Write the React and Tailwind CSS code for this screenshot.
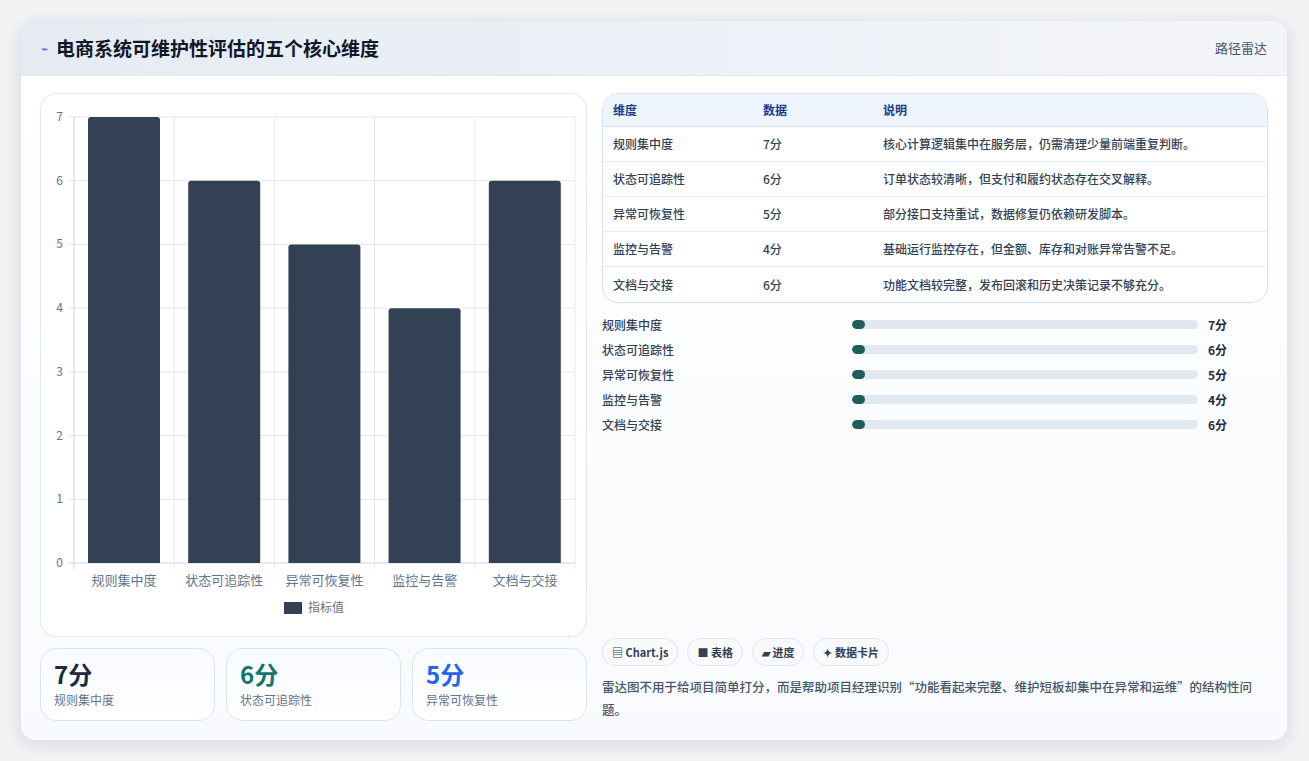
const rows = [
  { name: '规则集中度', v: 7, note: '核心计算逻辑集中在服务层，仍需清理少量前端重复判断。' },
  { name: '状态可追踪性', v: 6, note: '订单状态较清晰，但支付和履约状态存在交叉解释。' },
  { name: '异常可恢复性', v: 5, note: '部分接口支持重试，数据修复仍依赖研发脚本。' },
  { name: '监控与告警', v: 4, note: '基础运行监控存在，但金额、库存和对账异常告警不足。' },
  { name: '文档与交接', v: 6, note: '功能文档较完整，发布回滚和历史决策记录不够充分。' },
];

const font = { fontFamily: '"Noto Sans CJK SC", "Noto Sans", sans-serif' };

function Chart() {
  // plot area in svg coords: x 33..534, y 23..469
  const x0 = 33, w = 501, y0 = 23, h = 446;
  const step = w / 5;
  const unit = h / 7;
  return (
    <svg width="546" height="543" viewBox="0 0 546 543" className="block">
      {[0, 1, 2, 3, 4, 5, 6, 7].map((t) => (
        <g key={t}>
          <line x1={x0 - 6} x2={x0 + w} y1={y0 + h - t * unit} y2={y0 + h - t * unit} stroke={t === 0 ? '#cbd5e1' : '#e5e7eb'} />
          <text x={22} y={y0 + h - t * unit + 4} textAnchor="end" fontSize="12" fill="#64748b" style={font}>{t}</text>
        </g>
      ))}
      {[0, 1, 2, 3, 4, 5].map((i) => (
        <line key={i} x1={x0 + i * step} x2={x0 + i * step} y1={y0} y2={y0 + h + 6} stroke={i === 0 ? '#cbd5e1' : '#e5e7eb'} />
      ))}
      {rows.map((r, i) => {
        const bx = x0 + i * step + 14;
        const bh = r.v * unit;
        return (
          <g key={r.name}>
            <path d={`M${bx} ${y0 + h} V${y0 + h - bh + 3} Q${bx} ${y0 + h - bh} ${bx + 3} ${y0 + h - bh} H${bx + 69} Q${bx + 72} ${y0 + h - bh} ${bx + 72} ${y0 + h - bh + 3} V${y0 + h}Z`} fill="#334155" />
            <text x={x0 + i * step + step / 2} y={y0 + h + 22} textAnchor="middle" fontSize="13" fill="#64748b" style={font}>{r.name}</text>
          </g>
        );
      })}
      <rect x="243" y="508" width="18" height="12" fill="#334155" />
      <text x="267" y="518" fontSize="12" fill="#64748b" style={font}>指标值</text>
    </svg>
  );
}

export default function App() {
  return (
    <div className="min-h-screen bg-[#f1f2f4] pt-5 px-5" style={font}>
      <div className="w-[1268px] bg-white rounded-2xl shadow-[0_4px_16px_rgba(15,23,42,0.10)] border border-[#e2e8f0] overflow-hidden">
        <div className="h-[55px] flex items-center justify-between px-5 bg-gradient-to-r from-[#e6ebf3] to-[#f3f5f9] border-b border-[#e2e8f0]">
          <div className="flex items-center gap-2">
            <span className="text-[#3b6fd8] text-xs">⌁</span>
            <h1 className="text-[19px] font-bold text-[#0f172a]">电商系统可维护性评估的五个核心维度</h1>
          </div>
          <span className="text-[13px] text-[#475569]">路径雷达</span>
        </div>
        <div className="flex gap-[15px] px-[19px] pt-[17px] pb-[19px] bg-gradient-to-b from-white to-[#f8fafd]">
          <div className="w-[547px] flex flex-col gap-[11px]">
            <div className="h-[544px] rounded-2xl border border-[#e2e8f0] bg-white overflow-hidden">
              <Chart />
            </div>
            <div className="grid grid-cols-3 gap-[11px]">
              {[
                ['7分', '规则集中度', 'text-[#1e293b]'],
                ['6分', '状态可追踪性', 'text-[#0f766e]'],
                ['5分', '异常可恢复性', 'text-[#2563eb]'],
              ].map(([v, l, c]) => (
                <div key={l} className="h-[73px] rounded-2xl border border-[#dbe5f2] bg-gradient-to-b from-[#f8fbff] to-white px-[13px] pt-[10px]">
                  <div className={`text-[24px] leading-[30px] font-bold ${c}`}>{v}</div>
                  <div className="text-[12px] text-[#64748b] mt-0.5">{l}</div>
                </div>
              ))}
            </div>
          </div>
          <div className="flex-1 flex flex-col">
            <div className="rounded-2xl border border-[#d6e2f0] overflow-hidden bg-white text-[12px]">
              <div className="flex h-[33px] items-center bg-[#eef5ff] border-b border-[#d6e2f0] font-bold text-[#1e3a8a]">
                <div className="w-[160px] pl-[10px]">维度</div>
                <div className="w-[120px]">数据</div>
                <div>说明</div>
              </div>
              {rows.map((r, i) => (
                <div key={r.name} className={`flex h-[35px] items-center text-[#334155] font-medium ${i < 4 ? 'border-b border-[#e8edf3]' : ''}`}>
                  <div className="w-[160px] pl-[10px]">{r.name}</div>
                  <div className="w-[120px]">{r.v}分</div>
                  <div>{r.note}</div>
                </div>
              ))}
            </div>
            <div className="mt-[9px] flex flex-col">
              {rows.map((r) => (
                <div key={r.name} className="h-[25px] flex items-center text-[12px] text-[#334155] font-medium">
                  <div className="w-[250px]">{r.name}</div>
                  <div className="w-[346px] h-[9px] rounded-full bg-[#e2e8f0] overflow-hidden">
                    <div className="h-full w-[13px] rounded-full bg-[#1e5f5b]" />
                  </div>
                  <div className="ml-[10px] font-bold text-[#1e293b]">{r.v}分</div>
                </div>
              ))}
            </div>
            <div className="flex-1" />
            <div className="flex gap-[9px] text-[11px] font-bold text-[#334155]">
              {['▤ Chart.js', '■ 表格', '▰ 进度', '✦ 数据卡片'].map((t) => (
                <span key={t} className="h-[28px] px-[9px] flex items-center rounded-full border border-[#e2e8f0] bg-[#f8fafc]">{t}</span>
              ))}
            </div>
            <p className="mt-[9px] text-[12.5px] leading-[23px] text-[#475569] font-medium">雷达图不用于给项目简单打分，而是帮助项目经理识别“功能看起来完整、维护短板却集中在异常和运维”的结构性问题。</p>
          </div>
        </div>
      </div>
    </div>
  );
}
